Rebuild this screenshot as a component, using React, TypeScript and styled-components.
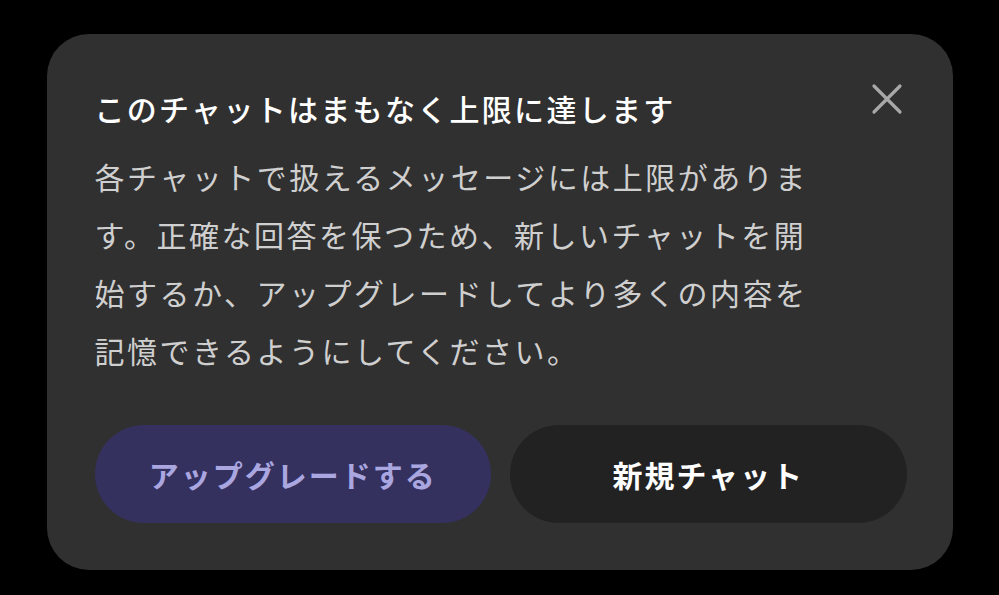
import React from 'react';
import styled, { createGlobalStyle } from 'styled-components';

const GlobalStyle = createGlobalStyle`
  html, body {
    margin: 0;
    padding: 0;
    background: #000;
  }
  body {
    font-family: "Noto Sans CJK JP", "Noto Sans", sans-serif;
  }
`;

const Page = styled.div`
  width: 999px;
  height: 595px;
  display: flex;
  justify-content: center;
  align-items: flex-start;
  padding-top: 34px;
  box-sizing: border-box;
`;

const Dialog = styled.div`
  width: 906px;
  height: 536px;
  box-sizing: border-box;
  background: #303030;
  border-radius: 42px;
  padding: 52px 46px 47px 48px;
  display: flex;
  flex-direction: column;
`;

const Header = styled.div`
  display: flex;
  justify-content: space-between;
  align-items: flex-start;
`;

const Title = styled.h2`
  margin: 0;
  font-size: 30px;
  line-height: 44px;
  font-weight: 500;
  letter-spacing: 2.3px;
  color: #ffffff;
`;

const CloseButton = styled.button`
  width: 40px;
  height: 40px;
  margin: -7px 0 0 0;
  padding: 0;
  border: none;
  background: transparent;
  display: flex;
  align-items: center;
  justify-content: center;
  cursor: pointer;
`;

const Body = styled.p`
  margin: 17px 0 0 0;
  max-width: 740px;
  font-size: 30px;
  line-height: 58px;
  letter-spacing: 2.5px;
  color: #cfcfcf;
`;

const Actions = styled.div`
  margin-top: auto;
  display: grid;
  grid-template-columns: 1fr 1fr;
  gap: 19px;
`;

const ActionButton = styled.button<{ $primary?: boolean }>`
  height: 98px;
  border: none;
  border-radius: 49px;
  font-family: inherit;
  font-size: 30px;
  font-weight: 700;
  letter-spacing: 2px;
  background: ${(p) => (p.$primary ? '#35315f' : '#222222')};
  color: ${(p) => (p.$primary ? '#a9a6e0' : '#ffffff')};
  cursor: pointer;
`;

function CloseIcon() {
  return (
    <svg width="32" height="32" viewBox="0 0 32 32" fill="none">
      <path
        d="M3 3 L29 29 M29 3 L3 29"
        stroke="#a8a8a8"
        strokeWidth="3.2"
        strokeLinecap="round"
      />
    </svg>
  );
}

export default function App() {
  return (
    <>
      <GlobalStyle />
      <Page>
        <Dialog>
          <Header>
            <Title>このチャットはまもなく上限に達します</Title>
            <CloseButton aria-label="閉じる">
              <CloseIcon />
            </CloseButton>
          </Header>
          <Body>
            各チャットで扱えるメッセージには上限があります。正確な回答を保つため、新しいチャットを開始するか、アップグレードしてより多くの内容を記憶できるようにしてください。
          </Body>
          <Actions>
            <ActionButton $primary>アップグレードする</ActionButton>
            <ActionButton>新規チャット</ActionButton>
          </Actions>
        </Dialog>
      </Page>
    </>
  );
}
